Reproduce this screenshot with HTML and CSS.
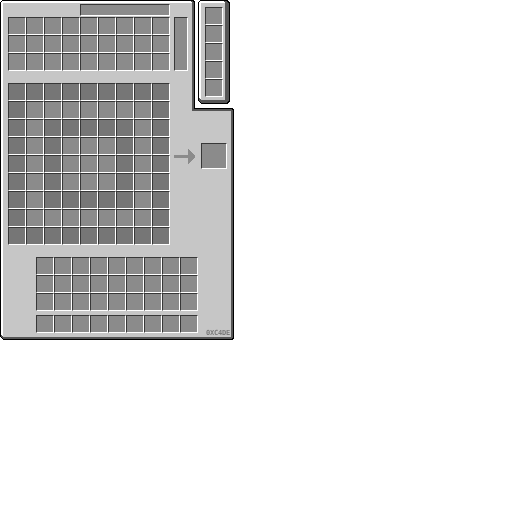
FILE: index.html
```html
<!DOCTYPE html>
<html lang="en">
<head>
<meta charset="utf-8">
<title>0XC4DE</title>
<link rel="stylesheet" href="styles.css">
</head>
<body>
<div class="stage">
  <main class="gui">
    <svg class="frame" width="234" height="340" viewBox="0 0 234 340" shape-rendering="crispEdges" aria-hidden="true">
      <polygon fill="#000" points="2,0 193,0 195,2 195,108 232,108 234,110 234,338 232,340 3,340 0,337 0,2"/>
      <polygon fill="#555" points="2,1 192,1 194,3 194,109 231,109 233,111 233,337 231,339 3,339 1,337 1,2"/>
      <polygon fill="#fff" points="2,1 190,1 192,3 192,111 229,111 231,113 231,335 229,337 3,337 1,335 1,2"/>
      <polygon fill="#c6c6c6" points="3,3 192,3 192,111 231,111 231,337 3,337"/>
    </svg>
    <div class="tab"></div>
    <section class="upper">
      <div class="grid">
        <i class="slot"></i><i class="slot"></i><i class="slot"></i><i class="slot"></i><i class="slot"></i><i class="slot"></i><i class="slot"></i><i class="slot"></i><i class="slot"></i>
        <i class="slot"></i><i class="slot"></i><i class="slot"></i><i class="slot"></i><i class="slot"></i><i class="slot"></i><i class="slot"></i><i class="slot"></i><i class="slot"></i>
        <i class="slot"></i><i class="slot"></i><i class="slot"></i><i class="slot"></i><i class="slot"></i><i class="slot"></i><i class="slot"></i><i class="slot"></i><i class="slot"></i>
      </div>
      <div class="scroll"></div>
    </section>
    <section class="craft">
      <div class="grid">
        <i class="slot dark"></i><i class="slot dark"></i><i class="slot dark"></i><i class="slot dark"></i><i class="slot dark"></i><i class="slot dark"></i><i class="slot dark"></i><i class="slot dark"></i><i class="slot dark"></i>
        <i class="slot dark"></i><i class="slot"></i><i class="slot"></i><i class="slot"></i><i class="slot"></i><i class="slot"></i><i class="slot"></i><i class="slot"></i><i class="slot dark"></i>
        <i class="slot dark"></i><i class="slot"></i><i class="slot dark"></i><i class="slot dark"></i><i class="slot dark"></i><i class="slot dark"></i><i class="slot dark"></i><i class="slot"></i><i class="slot dark"></i>
        <i class="slot dark"></i><i class="slot"></i><i class="slot dark"></i><i class="slot"></i><i class="slot"></i><i class="slot"></i><i class="slot dark"></i><i class="slot"></i><i class="slot dark"></i>
        <i class="slot dark"></i><i class="slot"></i><i class="slot dark"></i><i class="slot"></i><i class="slot"></i><i class="slot"></i><i class="slot dark"></i><i class="slot"></i><i class="slot dark"></i>
        <i class="slot dark"></i><i class="slot"></i><i class="slot dark"></i><i class="slot"></i><i class="slot"></i><i class="slot"></i><i class="slot dark"></i><i class="slot"></i><i class="slot dark"></i>
        <i class="slot dark"></i><i class="slot"></i><i class="slot dark"></i><i class="slot dark"></i><i class="slot dark"></i><i class="slot dark"></i><i class="slot dark"></i><i class="slot"></i><i class="slot dark"></i>
        <i class="slot dark"></i><i class="slot"></i><i class="slot"></i><i class="slot"></i><i class="slot"></i><i class="slot"></i><i class="slot"></i><i class="slot"></i><i class="slot dark"></i>
        <i class="slot dark"></i><i class="slot dark"></i><i class="slot dark"></i><i class="slot dark"></i><i class="slot dark"></i><i class="slot dark"></i><i class="slot dark"></i><i class="slot dark"></i><i class="slot dark"></i>
      </div>
      <div class="output">
        <svg class="arrow" width="22" height="15" viewBox="0 0 22 15" shape-rendering="crispEdges" aria-hidden="true">
          <path fill="#8b8b8b" d="M0 6h14V0h1v1h1v1h1v1h1v1h1v1h1v1h1v3h-1v1h-1v1h-1v1h-1v1h-1v1h-1v1h-1V9H0z"/>
        </svg>
        <div class="result"></div>
      </div>
    </section>
    <section class="inventory">
      <div class="grid">
        <i class="slot"></i><i class="slot"></i><i class="slot"></i><i class="slot"></i><i class="slot"></i><i class="slot"></i><i class="slot"></i><i class="slot"></i><i class="slot"></i>
        <i class="slot"></i><i class="slot"></i><i class="slot"></i><i class="slot"></i><i class="slot"></i><i class="slot"></i><i class="slot"></i><i class="slot"></i><i class="slot"></i>
        <i class="slot"></i><i class="slot"></i><i class="slot"></i><i class="slot"></i><i class="slot"></i><i class="slot"></i><i class="slot"></i><i class="slot"></i><i class="slot"></i>
      </div>
      <div class="grid hotbar">
        <i class="slot"></i><i class="slot"></i><i class="slot"></i><i class="slot"></i><i class="slot"></i><i class="slot"></i><i class="slot"></i><i class="slot"></i><i class="slot"></i>
      </div>
    </section>
    <span class="mark">0XC4DE</span>
  </main>
  <aside class="side">
    <svg class="frame" width="32" height="104" viewBox="0 0 32 104" shape-rendering="crispEdges" aria-hidden="true">
      <polygon fill="#000" points="2,0 29,0 32,3 32,101 29,104 3,104 0,101 0,2"/>
      <polygon fill="#555" points="2,1 28,1 31,3 31,101 28,103 3,103 1,101 1,2"/>
      <polygon fill="#fff" points="2,1 25,1 27,3 27,98 25,100 3,100 1,98 1,2"/>
      <polygon fill="#c6c6c6" points="3,3 27,3 27,100 3,100"/>
    </svg>
    <i class="slot"></i><i class="slot"></i><i class="slot"></i><i class="slot"></i><i class="slot"></i>
  </aside>
</div>
</body>
</html>
```

FILE: styles.css
```css
* {
  box-sizing: border-box;
}

html,
body {
  margin: 0;
  padding: 0;
  background: #fff;
}

.stage {
  position: relative;
  width: 512px;
  height: 512px;
}

.gui {
  position: relative;
  width: 234px;
  height: 340px;
  padding: 4px 0 0 8px;
}

.frame {
  position: absolute;
  top: 0;
  left: 0;
  display: block;
}

.tab,
.upper,
.craft,
.inventory {
  position: relative;
}

.tab {
  width: 90px;
  height: 12px;
  margin-left: 72px;
  background: #8b8b8b;
  border-style: solid;
  border-width: 1px;
  border-color: #373737 #fff #fff #373737;
}

.upper {
  display: flex;
  gap: 4px;
  margin-top: 1px;
}

.grid {
  display: grid;
  grid-template-columns: repeat(9, 18px);
  grid-auto-rows: 18px;
}

.slot {
  display: block;
  width: 18px;
  height: 18px;
  background: #8b8b8b;
  border-style: solid;
  border-width: 1px;
  border-color: #373737 #fff #fff #373737;
}

.slot.dark {
  background: #767676;
}

.scroll {
  width: 14px;
  height: 54px;
  background: #8b8b8b;
  border-style: solid;
  border-width: 1px;
  border-color: #373737 #fff #fff #373737;
}

.craft {
  display: flex;
  gap: 4px;
  margin-top: 12px;
}

.output {
  display: flex;
  align-items: center;
  gap: 5px;
  height: 26px;
  margin-top: 60px;
}

.arrow {
  display: block;
  flex: none;
}

.result {
  flex: none;
  width: 26px;
  height: 26px;
  background: #8b8b8b;
  border-style: solid;
  border-width: 1px;
  border-color: #373737 #fff #fff #373737;
}

.inventory {
  display: flex;
  flex-direction: column;
  gap: 4px;
  margin: 12px 0 0 28px;
}

.mark {
  position: absolute;
  right: 4px;
  bottom: 3px;
  font-family: "DejaVu Sans Mono", monospace;
  font-size: 7px;
  font-weight: 700;
  letter-spacing: -0.2px;
  line-height: 8px;
  color: #7a7a7a;
  will-change: transform;
}

.side {
  position: absolute;
  top: 0;
  left: 198px;
  width: 32px;
  height: 104px;
  padding: 7px 0 0 7px;
}

.side .slot {
  position: relative;
}
```
